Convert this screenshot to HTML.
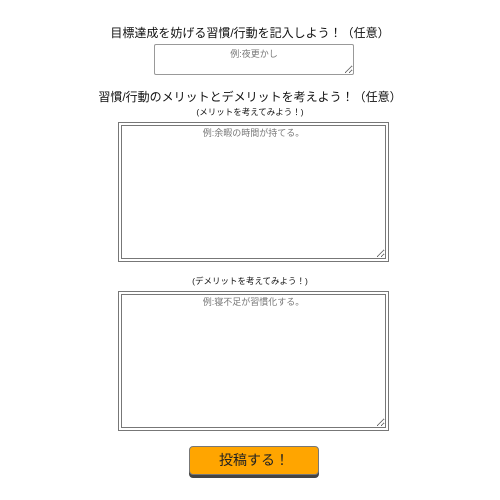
<!DOCTYPE html>
<html><head><meta charset="utf-8"><style>
body{margin:0;width:500px;height:500px;background:#fff;font-family:"Liberation Sans","Noto Sans CJK JP",sans-serif;position:relative;overflow:hidden}
.t{position:absolute;left:0;width:500px;text-align:center;color:#111}
.h{font-size:12px}
.s{font-size:8.5px}
textarea{position:absolute;box-sizing:border-box;margin:0;padding:2px;text-align:center;font-family:"Liberation Sans","Noto Sans CJK JP",sans-serif;font-size:9px;resize:both;background:#fff}
textarea::placeholder{color:#777}
.a1{left:154px;top:44px;width:200px;height:31px;border:1px solid #999;border-radius:2px}
.a2{left:118px;width:271px;height:140px;border:4px double #777;padding-top:0}
.btn{position:absolute;left:189px;top:446px;width:130px;height:29px;box-sizing:border-box;background:#ffa500;border:1px solid #777;border-radius:4px;box-shadow:0 3px 0 #444;font-size:14px;text-align:center;line-height:27px;color:#222}
</style></head><body>
<div class="t h" style="top:24px">目標達成を妨げる習慣/行動を記入しよう！（任意）</div>
<textarea class="a1" placeholder="例:夜更かし"></textarea>
<div class="t h" style="top:88px">習慣/行動のメリットとデメリットを考えよう！（任意）</div>
<div class="t s" style="top:106px">(メリットを考えてみよう！)</div>
<textarea class="a2" style="top:122px" placeholder="例:余暇の時間が持てる。"></textarea>
<div class="t s" style="top:275px">(デメリットを考えてみよう！)</div>
<textarea class="a2" style="top:291px" placeholder="例:寝不足が習慣化する。"></textarea>
<div class="btn">投稿する！</div>
</body></html>
